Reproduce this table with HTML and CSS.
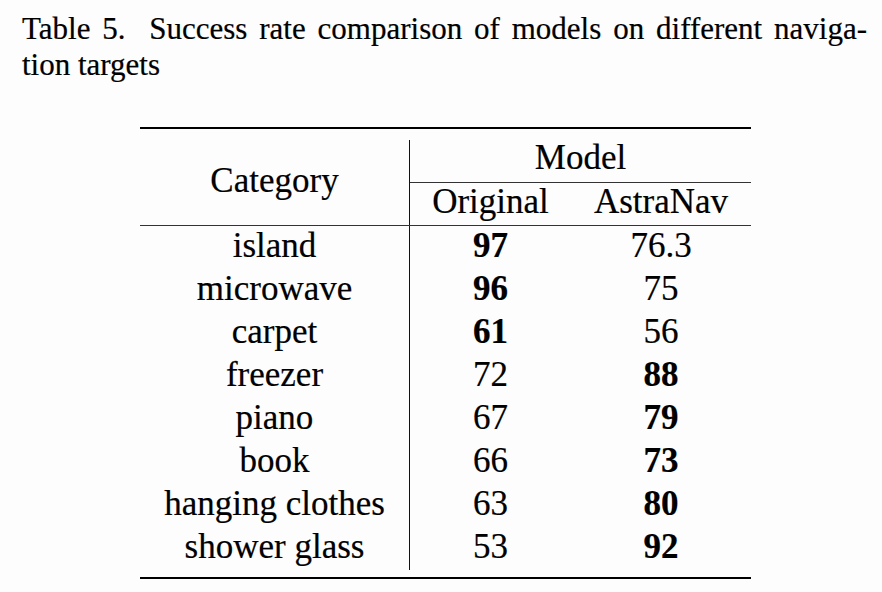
FILE: index.html
```html
<!DOCTYPE html>
<html lang="en">
<head>
<meta charset="utf-8">
<title>Table 5</title>
<link rel="stylesheet" href="styles.css">
</head>
<body>
<figure class="figure">
  <figcaption class="caption"><span class="caption-line">Table 5.&nbsp; Success rate comparison of models on different naviga-</span>tion targets</figcaption>
  <div class="results" role="table">
    <div class="thead" role="rowgroup">
      <div class="cell cat-head" role="columnheader">Category</div>
      <div class="cell model-head" role="columnheader">Model</div>
      <div class="cell sub-head" role="columnheader">Original</div>
      <div class="cell sub-head" role="columnheader">AstraNav</div>
    </div>
    <div class="tbody" role="rowgroup">
      <div class="cell name">island</div><div class="cell num"><b>97</b></div><div class="cell num">76.3</div>
      <div class="cell name">microwave</div><div class="cell num"><b>96</b></div><div class="cell num">75</div>
      <div class="cell name">carpet</div><div class="cell num"><b>61</b></div><div class="cell num">56</div>
      <div class="cell name">freezer</div><div class="cell num">72</div><div class="cell num"><b>88</b></div>
      <div class="cell name">piano</div><div class="cell num">67</div><div class="cell num"><b>79</b></div>
      <div class="cell name">book</div><div class="cell num">66</div><div class="cell num"><b>73</b></div>
      <div class="cell name">hanging clothes</div><div class="cell num">63</div><div class="cell num"><b>80</b></div>
      <div class="cell name">shower glass</div><div class="cell num">53</div><div class="cell num"><b>92</b></div>
    </div>
  </div>
</figure>
</body>
</html>
```
FILE: styles.css
```css
html, body {
  margin: 0;
  padding: 0;
  background: #fdfdfd;
}

body {
  font-family: "Liberation Serif", "Times New Roman", serif;
  color: #000;
  -webkit-text-stroke: 0.2px #000;
}

.figure {
  margin: 0;
  padding: 11px 0 0 22px;
}

.caption {
  width: 845px;
  font-size: 31px;
  line-height: 36px;
  text-align: left;
}

.caption-line {
  display: block;
  text-align: justify;
  text-align-last: justify;
}

.results {
  width: 611px;
  margin: 44px 0 0 118px;
  border-top: 2px solid #000;
  border-bottom: 2px solid #000;
  font-size: 35px;
}

.thead,
.tbody {
  display: grid;
  grid-template-columns: 270px 161px 180px;
}

.thead {
  padding-top: 11px;
}

.cell {
  text-align: center;
  white-space: nowrap;
}

.cat-head {
  grid-row: span 2;
  display: flex;
  align-items: center;
  justify-content: center;
  padding-bottom: 4px;
  border-right: 1px solid #111;
}

.model-head {
  grid-column: span 2;
  line-height: 31px;
  padding-top: 2px;
  padding-bottom: 9px;
  border-bottom: 1px solid #333;
}

.sub-head {
  line-height: 31px;
  padding-top: 3px;
  padding-bottom: 8px;
}

.tbody {
  border-top: 1px solid #333;
  padding-bottom: 7px;
}

.tbody .cell {
  line-height: 38px;
  padding-top: 1px;
  padding-bottom: 4px;
}

.tbody .name {
  border-right: 1px solid #111;
}

.num b {
  font-weight: 700;
}
```
